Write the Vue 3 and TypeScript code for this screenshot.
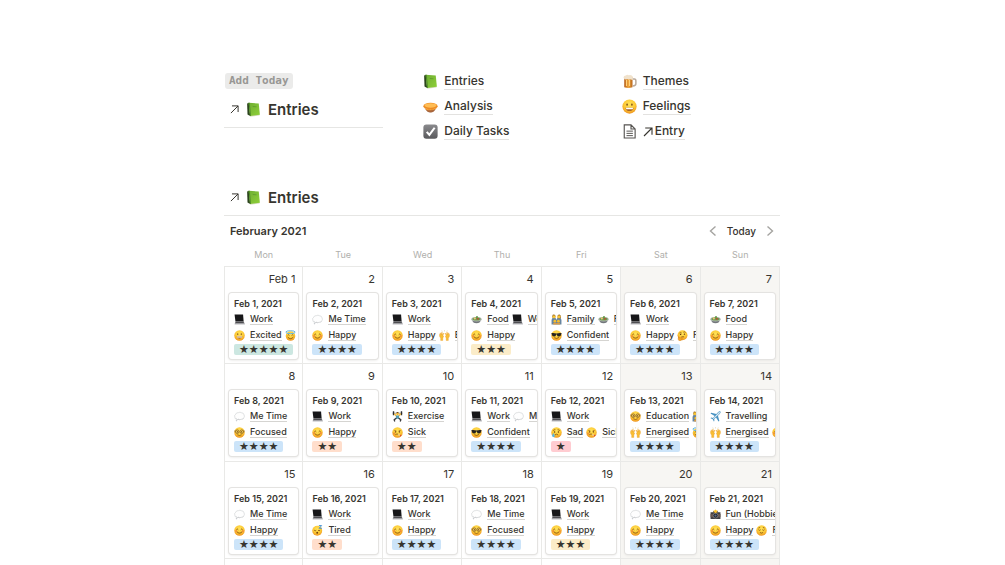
<script setup lang="ts">
interface Tag {
  icon: string
  label: string
}

interface Day {
  day: number
  themes: Tag[]
  feelings: Tag[]
  stars: number
}

const t = (icon: string, label: string): Tag => ({ icon, label })

const work = t('laptop', 'Work')
const meTime = t('thought', 'Me Time')
const food = t('salad', 'Food')
const family = t('family', 'Family')
const happy = t('smile', 'Happy')
const focused = t('nerd', 'Focused')
const confident = t('cool', 'Confident')
const energised = t('hands', 'Energised')
const sick = t('sick', 'Sick')
const grateful = t('halo', 'Grateful')

const d = (day: number, themes: Tag[], feelings: Tag[], stars: number): Day => ({ day, themes, feelings, stars })

const weeks: Day[][] = [
  [
    d(1, [work], [t('grin', 'Excited'), grateful], 5),
    d(2, [meTime], [happy], 4),
    d(3, [work], [happy, energised], 4),
    d(4, [food, work], [happy], 3),
    d(5, [family, food], [confident], 4),
    d(6, [work], [happy, t('thinking', 'Reflective')], 4),
    d(7, [food], [happy], 4),
  ],
  [
    d(8, [meTime], [focused], 4),
    d(9, [work], [happy], 2),
    d(10, [t('lifter', 'Exercise')], [sick], 2),
    d(11, [work, meTime], [confident], 4),
    d(12, [work], [t('sad', 'Sad'), sick], 1),
    d(13, [t('nerd', 'Education'), family], [energised, grateful], 4),
    d(14, [t('plane', 'Travelling')], [energised, happy], 4),
  ],
  [
    d(15, [meTime], [happy], 4),
    d(16, [work], [t('sleepy', 'Tired')], 2),
    d(17, [work], [happy], 4),
    d(18, [meTime], [focused], 4),
    d(19, [work], [happy], 3),
    d(20, [meTime], [happy], 4),
    d(21, [t('camera', 'Fun (Hobbies)')], [happy, t('relieved', 'Relaxed')], 4),
  ],
]

const weekdays = ['Mon', 'Tue', 'Wed', 'Thu', 'Fri', 'Sat', 'Sun']

const linkColumns: Tag[][] = [
  [t('book', 'Entries'), t('pie', 'Analysis'), t('check', 'Daily Tasks')],
  [t('beer', 'Themes'), t('grin', 'Feelings'), t('page', 'Entry')],
]
</script>

<template>
  <svg class="sprite" aria-hidden="true">
    <defs>
      <radialGradient id="face" cx="50%" cy="35%" r="65%">
        <stop offset="0" stop-color="#ffe45c" />
        <stop offset=".6" stop-color="#fcc934" />
        <stop offset="1" stop-color="#ee9321" />
      </radialGradient>
      <linearGradient id="cover" x1="0" y1="0" x2="1" y2="1">
        <stop offset="0" stop-color="#6fae33" />
        <stop offset="1" stop-color="#8fd038" />
      </linearGradient>
      <linearGradient id="box" x1="0" y1="0" x2="0" y2="1">
        <stop offset="0" stop-color="#8b8b8e" />
        <stop offset="1" stop-color="#59595c" />
      </linearGradient>
      <linearGradient id="ale" x1="0" y1="0" x2="1" y2="0">
        <stop offset="0" stop-color="#b35a14" />
        <stop offset=".5" stop-color="#f0a63a" />
        <stop offset="1" stop-color="#b8661d" />
      </linearGradient>
      <linearGradient id="keys" x1="0" y1="0" x2="0" y2="1">
        <stop offset="0" stop-color="#66666a" />
        <stop offset="1" stop-color="#b9b9bd" />
      </linearGradient>
    </defs>
    <symbol id="i-book" viewBox="0 0 20 20">
      <path d="M1.500 2L4 1l1.500 17.500-3.500-2z" fill="#2c451d" />
      <path d="M5 18l13-1.500v1.500L5.500 19.500z" fill="#dcdccb" />
      <path d="M3.500 1l13.500 1 1.500 15L5.500 18.700z" fill="url(#cover)" />
      <path d="M3.500 1l1.500.1 1.700 17.400-1.200.2z" fill="#4d8a26" />
      <path d="M9 6l5 .4" stroke="#5b9430" stroke-width="1" />
    </symbol>
    <symbol id="i-pie" viewBox="0 0 20 20">
      <path d="M2 10c1 5 4 8 8 8s7-3 8-8z" fill="#d8d4cf" />
      <path d="M3 13c2 4 4 5 7 5s5-1 7-5z" fill="#a9653c" />
      <ellipse cx="10" cy="9.500" rx="9.500" ry="4.500" fill="#ec8b24" />
      <ellipse cx="10" cy="8.500" rx="8" ry="3" fill="#ffbd54" />
      <path d="M1 10.500q2 4 4 1.500 2 3 5 1 3 2 5-1 3 1 4-2-1 5-9 5t-9-4.500z" fill="#f6a035" />
    </symbol>
    <symbol id="i-check" viewBox="0 0 20 20">
      <rect x=".5" y=".5" width="19" height="19" rx="4" fill="url(#box)" />
      <path d="M5 10.500l3.500 4L15.500 5" fill="none" stroke="#fff" stroke-width="2.800" />
    </symbol>
    <symbol id="i-beer" viewBox="0 0 20 20">
      <path d="M13 6.500h3.500q2 0 2 2.500v4q0 2.500-4 3" fill="none" stroke="#b9a99a" stroke-width="2" />
      <path d="M3 4h11v13.500q-5.500 2-11 0z" fill="url(#ale)" />
      <path d="M6 8v8M10 8v8" stroke="#ffd27b" stroke-width="1.500" />
      <path d="M2 5q0-3 3-3 2-2 4-.5 4-1 5.500 2v4q-1.500 1-2.500-.5Q9 8 7 6.500 4 9 2 5z" fill="#f0e2cd" />
    </symbol>
    <symbol id="i-page" viewBox="0 0 20 20">
      <path d="M3 1.200h9l5.500 5.500v12H3zM12 1.200v5.500h5.500" fill="none" stroke="#555350" stroke-width="1.500" />
      <path d="M6 9.500h8.500M6 12.500h8.500M6 15.500h8.500" stroke="#555350" stroke-width="1.300" />
    </symbol>
    <symbol id="i-laptop" viewBox="0 0 20 20">
      <path d="M1 1h15.500l1 12H2.500z" fill="#171719" />
      <path d="M2.500 13h15l2.500 6H1z" fill="url(#keys)" />
      <path d="M3.500 14h13.500l.8 1.800H3z" fill="#3b3b3f" />
    </symbol>
    <symbol id="i-thought" viewBox="0 0 20 20">
      <path d="M5 15q-4-.5-3.500-4-1.500-3 1.500-5 1-3.500 5-3 3-2 5.500.2 4-.2 4.500 3.300 2 3 0 5.500-1 4-5 3-3 2-5 .3Q6.500 16.500 5 15z" fill="#fefefe" stroke="#c7c9cc" stroke-width="1" />
      <path d="M3 13q2 2 5 1 3 2.500 6 .5 3 .5 4-2.500-.5 4-5 3-3 2-5 .3-4 1-5-2.300z" fill="#bfc1c5" />
      <circle cx="4.500" cy="17.500" r="1.300" fill="#c4c7cb" />
    </symbol>
    <symbol id="i-salad" viewBox="0 0 20 20">
      <path d="M2 10q1 7 8 7t8-7z" fill="#72777b" />
      <ellipse cx="10" cy="9.500" rx="9.500" ry="4" fill="#b7bdb9" />
      <ellipse cx="10" cy="9" rx="7.500" ry="3" fill="#70994f" />
      <circle cx="7" cy="8" r="2" fill="#e5c67a" />
      <circle cx="12.500" cy="8.500" r="1.800" fill="#b65134" />
      <path d="M8.500 6q2-4 4.500-1l-2 3z" fill="#629845" />
    </symbol>
    <symbol id="i-family" viewBox="0 0 20 20">
      <path d="M1 11q0-4 4.500-4T10 11v8H1zM10 11q0-4 4.500-4T19 11v8h-9z" fill="#6685a2" />
      <path d="M3 1.500q3-2 5 1v4H2zM12 2.500q3-3 5.500 0l.5 5h-6z" fill="#91611c" />
      <circle cx="5.500" cy="5" r="2.800" fill="#f7c334" />
      <circle cx="14.500" cy="5" r="2.800" fill="#f7c334" />
      <circle cx="7" cy="13" r="2.500" fill="#f5bd2d" />
      <circle cx="13.500" cy="13" r="2.500" fill="#f5bd2d" />
      <path d="M4 19v-2q3-3 6 0 4-3 6.500 0v2z" fill="#dc9c44" />
    </symbol>
    <symbol id="i-smile" viewBox="0 0 20 20">
      <circle cx="10" cy="10" r="9.500" fill="url(#face)" />
      <path d="M4.300 8.800q1.700-3 3.400 0M12.300 8.800q1.700-3 3.400 0M5 12q5 5.500 10 0" fill="none" stroke="#76400d" stroke-width="1.400" />
      <circle cx="3.800" cy="11.300" r="2" fill="#f27b3a" opacity=".6" />
      <circle cx="16.200" cy="11.300" r="2" fill="#f27b3a" opacity=".6" />
    </symbol>
    <symbol id="i-grin" viewBox="0 0 20 20">
      <circle cx="10" cy="10" r="9.500" fill="url(#face)" />
      <ellipse cx="6.800" cy="7.500" rx="1.100" ry="1.500" fill="#80501a" />
      <ellipse cx="13.200" cy="7.500" rx="1.100" ry="1.500" fill="#80501a" />
      <path d="M4.500 11.500h11q-1 4.500-5.500 4.500t-5.500-4.500z" fill="#a5642a" />
      <path d="M5 11.800h10l-.8 2H5.800z" fill="#fff" />
    </symbol>
    <symbol id="i-halo" viewBox="0 0 20 20">
      <circle cx="10" cy="11" r="8.700" fill="url(#face)" />
      <ellipse cx="10" cy="4" rx="8.500" ry="2.700" fill="none" stroke="#62b4dd" stroke-width="1.800" />
      <path d="M5 10q1.500-2.500 3 0M12 10q1.500-2.500 3 0M5 13q5 5.500 10 0" fill="none" stroke="#76400d" stroke-width="1.400" />
    </symbol>
    <symbol id="i-nerd" viewBox="0 0 20 20">
      <circle cx="10" cy="10" r="9.500" fill="url(#face)" />
      <circle cx="6" cy="8.500" r="3.200" fill="#fbd65c" stroke="#8a5f22" stroke-width="1.500" />
      <circle cx="14" cy="8.500" r="3.200" fill="#fbd65c" stroke="#8a5f22" stroke-width="1.500" />
      <circle cx="6.300" cy="8.700" r="1.200" fill="#55310c" />
      <circle cx="13.700" cy="8.700" r="1.200" fill="#55310c" />
      <path d="M.8 7.500h2M17.200 7.500h2" stroke="#72501f" stroke-width="1.500" />
      <path d="M6 14q4 3 8 0" fill="none" stroke="#76400d" stroke-width="1.200" />
    </symbol>
    <symbol id="i-cool" viewBox="0 0 20 20">
      <circle cx="10" cy="10" r="9.500" fill="url(#face)" />
      <path d="M.8 5.500q4.700-.8 9.200.8 4.500-1.600 9.200-.8l-.5 2q-.7 4.500-4 4.500-3.500 0-4.200-4h-1q-.7 4-4.200 4-3.300 0-4-4.500z" fill="#27231f" />
      <path d="M6 14q4.500 3 8.500-.5" fill="none" stroke="#76400d" stroke-width="1.400" />
    </symbol>
    <symbol id="i-thinking" viewBox="0 0 20 20">
      <circle cx="10" cy="9.500" r="9" fill="url(#face)" />
      <circle cx="6.500" cy="8" r="1.300" fill="#67390d" />
      <circle cx="13.500" cy="7.500" r="1.300" fill="#67390d" />
      <path d="M4.500 5.500q2-1 4 0M11.500 4q2.500-1.500 4 .5M7.500 13q3-1.500 5.500-.5" fill="none" stroke="#76400d" stroke-width="1.300" />
      <path d="M3 12l1.500 2.500 6-1.500q1.500.8 0 1.800l-2 .7q1.500 3-2 4-4 .7-4.500-3z" fill="#f3a527" stroke="#c8751b" stroke-width=".7" />
    </symbol>
    <symbol id="i-sick" viewBox="0 0 20 20">
      <circle cx="10" cy="10" r="9.500" fill="url(#face)" />
      <path d="M4.500 6.500l3.500 1M12 7.500l3.500-1M6 14q3.500-3 6 0" fill="none" stroke="#76400d" stroke-width="1.300" />
      <circle cx="6.500" cy="9" r="1.200" fill="#67390d" />
      <circle cx="13.500" cy="9" r="1.200" fill="#67390d" />
      <path d="M11 14l4 1.500" stroke="#f7f4ec" stroke-width="1.500" />
      <circle cx="15.500" cy="15.500" r="1.500" fill="#dc4a32" />
      <circle cx="4" cy="12" r="2" fill="#ed6e37" opacity=".6" />
    </symbol>
    <symbol id="i-sad" viewBox="0 0 20 20">
      <circle cx="10" cy="10" r="9.500" fill="url(#face)" />
      <circle cx="6.500" cy="9" r="1.300" fill="#67390d" />
      <circle cx="13.500" cy="9" r="1.300" fill="#67390d" />
      <path d="M4 6.500q2-2 4-1.500M12 5q2 0 4 1.500M7 14.500q3-3 6 0" fill="none" stroke="#76400d" stroke-width="1.300" />
      <path d="M4.500 11q3 4 2.500 6-2.500 3-5 0-.5-2 2.500-6z" fill="#56b7e8" />
    </symbol>
    <symbol id="i-sleepy" viewBox="0 0 20 20">
      <circle cx="9.500" cy="10.500" r="9" fill="url(#face)" />
      <path d="M4 9.500q2 2 3.700 0M11 9.500q2 2 3.700 0" fill="none" stroke="#76400d" stroke-width="1.400" />
      <circle cx="9.500" cy="14" r="1.800" fill="#76400d" />
      <path d="M12.500 1h5L13 6h5" fill="none" stroke="#438ed0" stroke-width="1.700" />
    </symbol>
    <symbol id="i-relieved" viewBox="0 0 20 20">
      <circle cx="10" cy="10" r="9.500" fill="url(#face)" />
      <path d="M4.500 8.500q2 2.500 4 0M11.500 8.500q2 2.500 4 0M4.500 5.500l3-1M12.500 4.500l3 1M7 13.500q3 2.500 6 0" fill="none" stroke="#76400d" stroke-width="1.300" />
    </symbol>
    <symbol id="i-hands" viewBox="0 0 20 20">
      <path d="M6 3L5 1M10 2.500V.5M14 3l1-2" stroke="#d6bd83" stroke-width="1" />
      <path d="M3 19v-4Q0 11 1 8l1.500-3 1 3L5 4l1 .5-.5 4L8 5.500l.8 1L7 10l1.500 1-1.500 4v4z" fill="#f8bd35" stroke="#e89a27" stroke-width=".6" />
      <path d="M17 19v-4q3-4 2-7l-1.500-3-1 3L15 4l-1 .5.500 4L12 5.500l-.8 1L13 10l-1.500 1 1.500 4v4z" fill="#f8bd35" stroke="#e89a27" stroke-width=".6" />
    </symbol>
    <symbol id="i-lifter" viewBox="0 0 20 20">
      <path d="M1 4h18" stroke="#555" stroke-width="1" />
      <path d="M1.500.5h2.500v7H1.500zM16 .5h2.500v7H16z" fill="#2d2d2e" />
      <path d="M4 5l4 4M16 5l-4 4" stroke="#f2b632" stroke-width="2.200" />
      <circle cx="10" cy="5" r="2.500" fill="#f2b632" />
      <path d="M7.500 3.500q2.500-3 5 0z" fill="#633d1c" />
      <path d="M7 8h6l-.5 6h-5z" fill="#4c9ab3" />
      <path d="M8 13l-4 3 1 3M12 13l4 3-1 3" fill="none" stroke="#3a3a3c" stroke-width="2.400" />
    </symbol>
    <symbol id="i-plane" viewBox="0 0 20 20">
      <path d="M19 1q-2-1-4 1l-3.500 3.500L2 3 1 4.500l7.500 4.500-3 3.500L2 12l-1 1 4 2 2 4 1-1-.3-3.300 3.300-3L15.500 19l1.500-1-2.500-9.500L18 5q2-2 1-4z" fill="#4792c2" />
      <path d="M18 2q-2-.5-3 1L5.500 13.500l-.5 1.500 1.500-.5L17 5q1.500-1.500 1-3z" fill="#d7e9f3" />
    </symbol>
    <symbol id="i-camera" viewBox="0 0 20 20">
      <path d="M1 6h4l1-2h8l1 2h4v12H1z" fill="#414145" />
      <path d="M1 9h18v6H1z" fill="#67554d" />
      <circle cx="10" cy="12" r="4.500" fill="#25262c" stroke="#a1a1a5" stroke-width="1" />
      <circle cx="10" cy="12" r="2" fill="#52698a" />
      <path d="M10 0l1 2.500 3-.5-1.500 2.500L14 7l-3-.5L9.500 8 8.500 6 6 6.500 7.500 4 6 2l3 .5z" fill="#ffc32b" />
    </symbol>
    <symbol id="i-arrow" viewBox="0 0 10 10">
      <path d="M1 9L9 1M2.200 1H9v6.800" fill="none" stroke="currentColor" stroke-width="1.100" />
    </symbol>
  </svg>

  <main class="page">
    <section class="top">
      <div class="intro">
        <button class="add" type="button">Add Today</button>
        <h2 class="heading">
          <svg class="arrow"><use href="#i-arrow" /></svg>
          <svg class="emoji"><use href="#i-book" /></svg>
          <span>Entries</span>
        </h2>
      </div>
      <nav v-for="(column, c) in linkColumns" :key="c" class="links">
        <a v-for="link in column" :key="link.label" class="link" href="#">
          <svg class="emoji"><use :href="`#i-${link.icon}`" /></svg>
          <svg v-if="link.icon === 'page'" class="link-arrow"><use href="#i-arrow" /></svg>
          <span class="link-text">{{ link.label }}</span>
        </a>
      </nav>
    </section>

    <section>
      <h2 class="heading">
        <svg class="arrow"><use href="#i-arrow" /></svg>
        <svg class="emoji"><use href="#i-book" /></svg>
        <span>Entries</span>
      </h2>
      <header class="bar">
        <h3 class="month">February 2021</h3>
        <div class="pager">
          <button type="button" aria-label="Previous month">
            <svg class="chevron" viewBox="0 0 8 10"><path d="M6.500.5L1.500 5l5 4.500" /></svg>
          </button>
          <button class="today" type="button">Today</button>
          <button type="button" aria-label="Next month">
            <svg class="chevron" viewBox="0 0 8 10"><path d="M1.500.5l5 4.500-5 4.500" /></svg>
          </button>
        </div>
      </header>

      <table class="calendar">
        <thead>
          <tr>
            <th v-for="name in weekdays" :key="name" scope="col">{{ name }}</th>
          </tr>
        </thead>
        <tbody>
          <tr v-for="(week, w) in weeks" :key="w">
            <td v-for="entry in week" :key="entry.day">
              <div class="date">{{ entry.day === 1 ? 'Feb 1' : entry.day }}</div>
              <article class="card">
                <h4 class="title">Feb {{ entry.day }}, 2021</h4>
                <div v-for="(tags, r) in [entry.themes, entry.feelings]" :key="r" class="tags">
                  <a v-for="tag in tags" :key="tag.label" class="tag" href="#">
                    <svg class="mini"><use :href="`#i-${tag.icon}`" /></svg>
                    <span class="tag-text">{{ tag.label }}</span>
                  </a>
                </div>
                <span class="rating" :class="`rating-${entry.stars}`">{{ '★'.repeat(entry.stars) }}</span>
              </article>
            </td>
          </tr>
          <tr>
            <td v-for="name in weekdays" :key="name"></td>
          </tr>
        </tbody>
      </table>
    </section>
  </main>
</template>

<style>
body {
  background: #fff;
}
</style>

<style scoped>
.sprite {
  position: absolute;
  width: 0;
  height: 0;
}

.page {
  box-sizing: border-box;
  height: 100vh;
  overflow: hidden;
  padding: 68px 225px 0 224px;
  color: #37352f;
  font-family: Inter, "Liberation Sans", sans-serif;
}

h2,
h3,
h4 {
  margin: 0;
}

a {
  color: inherit;
  text-decoration: none;
}

button {
  padding: 0;
  border: 0;
  background: none;
  color: inherit;
  font-family: inherit;
}

svg {
  display: block;
  flex: none;
}

.top {
  display: grid;
  grid-template-columns: repeat(3, 1fr);
  gap: 39px;
  height: 112px;
}

.add {
  display: block;
  height: 16px;
  margin: 5px 0 3px 1px;
  padding: 0 4px;
  border-radius: 3px;
  background: #ebebea;
  color: #989794;
  font: bold 11px/16px "DejaVu Sans Mono", monospace;
}

.heading {
  display: flex;
  align-items: center;
  height: 35px;
  padding-left: 6px;
  border-bottom: 1px solid #e6e6e4;
  font-size: 15px;
  font-weight: 600;
  line-height: 24px;
}

.arrow {
  width: 9px;
  height: 9px;
  margin-right: 7px;
}

.heading .emoji {
  margin-right: 7px;
}

.emoji {
  width: 15px;
  height: 15px;
}

.links {
  padding-top: 1px;
}

.link {
  display: flex;
  align-items: center;
  height: 25px;
  padding-left: 1px;
  font-size: 12px;
  font-weight: 500;
}

.link .emoji {
  margin-right: 6px;
}

.link-arrow {
  width: 10px;
  height: 10px;
  margin-right: 2px;
}

.link-text {
  border-bottom: 1px solid #e3e2e0;
  line-height: 16px;
}

.bar {
  display: flex;
  align-items: center;
  justify-content: space-between;
  height: 30px;
  padding: 0 6px;
}

.month {
  font-size: 11px;
  font-weight: 600;
}

.pager {
  display: flex;
  align-items: center;
  gap: 10px;
}

.today {
  font-size: 10px;
  font-weight: 500;
}

.chevron {
  width: 8px;
  height: 10px;
  fill: none;
  stroke: #a5a4a1;
  stroke-width: 1.4;
}

.calendar {
  width: 100%;
  table-layout: fixed;
  border-collapse: separate;
  border-spacing: 0;
}

th {
  height: 17px;
  padding: 0 0 3px;
  border-bottom: 1px solid #e9e9e7;
  color: #b0afac;
  font-size: 9px;
  font-weight: 400;
}

td {
  height: 96px;
  padding: 0 4px;
  border-right: 1px solid #e9e9e7;
  border-bottom: 1px solid #e9e9e7;
  vertical-align: top;
}

tr:nth-child(even) td {
  height: 97px;
}

td:first-child {
  border-left: 1px solid #e9e9e7;
}

td:nth-child(n + 6) {
  background: #f7f6f3;
}

.date {
  height: 26px;
  padding-right: 3px;
  font-size: 11px;
  line-height: 25px;
  text-align: right;
}

.card {
  height: 63px;
  padding: 3px 0 0 5px;
  border-radius: 3px;
  background: #fff;
  box-shadow: 0 0 0 1px #e4e3e1, 0 1px 3px #dddcda;
  overflow: hidden;
}

.title {
  font-size: 9px;
  font-weight: 600;
  line-height: 15px;
}

.tags {
  display: flex;
  gap: 3px;
  height: 16px;
}

.tag {
  display: flex;
  flex: none;
  align-items: center;
  gap: 5px;
  font-size: 9px;
  font-weight: 500;
}

.mini {
  width: 11px;
  height: 11px;
}

.tag-text {
  border-bottom: 1px solid #d5d4d1;
  line-height: 11px;
}

.rating {
  display: block;
  width: max-content;
  height: 11px;
  margin-top: 1px;
  padding: 0 5px;
  border-radius: 2px;
  font-family: "DejaVu Sans", sans-serif;
  font-size: 11px;
  line-height: 11px;
}

.rating-5 {
  background: #cce7e1;
}

.rating-4 {
  background: #cce4f9;
}

.rating-3 {
  background: #fbecc8;
}

.rating-2 {
  background: #ffdecc;
}

.rating-1 {
  background: #ffccd1;
}
</style>
